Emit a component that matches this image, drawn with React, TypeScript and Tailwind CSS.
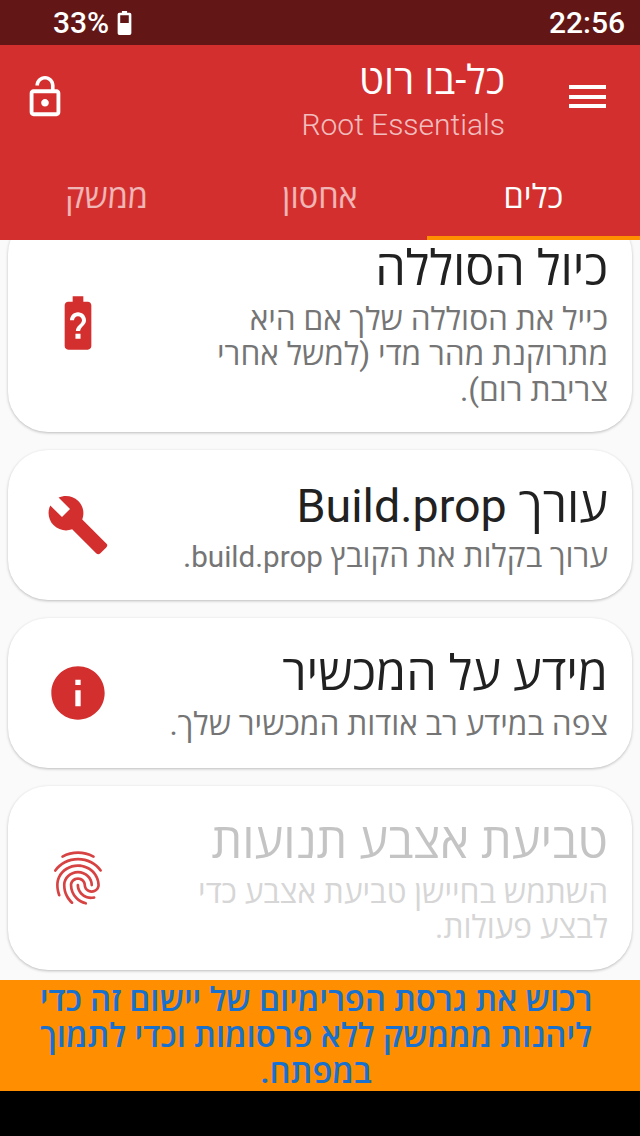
import type { ReactNode } from "react";

const batteryUnknown =
  "M15.67 4H14V2h-4v2H8.33C7.6 4 7 4.6 7 5.33v15.33C7 21.4 7.6 22 8.33 22h7.33c.74 0 1.34-.6 1.34-1.33V5.33C17 4.6 16.4 4 15.67 4zm-2.72 13.95h-1.9v-1.9h1.9v1.9zm1.35-5.26s-.38.42-.67.71c-.48.48-.83 1.15-.83 1.6h-1.6c0-.83.46-1.52.93-2l.93-.94c.27-.27.44-.65.44-1.06 0-.83-.67-1.5-1.5-1.5s-1.5.67-1.5 1.5H9c0-1.66 1.34-3 3-3s3 1.34 3 3c0 .66-.27 1.26-.7 1.69z";
const wrench =
  "M22.7 19l-9.1-9.1c.9-2.3.4-5-1.5-6.9-2-2-5-2.4-7.4-1.3L9 6 6 9 1.6 4.7C.4 7.1.9 10.1 2.9 12.1c1.9 1.9 4.6 2.4 6.9 1.5l9.1 9.1c.4.4 1 .4 1.4 0l2.3-2.3c.5-.4.5-1.1.1-1.4z";
const info =
  "M12 2C6.48 2 2 6.48 2 12s4.48 10 10 10 10-4.48 10-10S17.52 2 12 2zm1 15h-2v-6h2v6zm0-8h-2V7h2v2z";
const fingerprint =
  "M17.81 4.47c-.08 0-.16-.02-.23-.06C15.66 3.42 14 3 12.01 3c-1.98 0-3.86.47-5.57 1.41-.24.13-.54.04-.68-.2-.13-.24-.04-.55.2-.68C7.82 2.52 9.86 2 12.01 2c2.13 0 3.99.47 6.03 1.52.25.13.34.43.21.67-.09.18-.26.28-.44.28zM3.5 9.72c-.1 0-.2-.03-.29-.09-.23-.16-.28-.47-.12-.7.99-1.4 2.25-2.5 3.75-3.27C9.98 4.04 14 4.03 17.15 5.65c1.5.77 2.76 1.86 3.75 3.25.16.22.11.54-.12.7-.23.16-.54.11-.7-.12-.9-1.26-2.04-2.25-3.39-2.94-2.87-1.47-6.54-1.47-9.4.01-1.36.7-2.5 1.7-3.4 2.96-.08.14-.23.21-.39.21zm6.25 12.07c-.13 0-.26-.05-.35-.15-.87-.87-1.34-1.43-2.01-2.64-.69-1.23-1.05-2.73-1.05-4.34 0-2.97 2.54-5.39 5.66-5.39s5.66 2.42 5.66 5.39c0 .28-.22.5-.5.5s-.5-.22-.5-.5c0-2.42-2.09-4.39-4.66-4.39s-4.66 1.97-4.66 4.39c0 1.44.32 2.77.93 3.85.64 1.15 1.08 1.64 1.85 2.42.19.2.19.51 0 .71-.11.1-.24.15-.37.15zm7.17-1.85c-1.19 0-2.24-.3-3.1-.89-1.49-1.01-2.38-2.65-2.38-4.39 0-.28.22-.5.5-.5s.5.22.5.5c0 1.41.72 2.74 1.94 3.56.71.48 1.54.71 2.54.71.24 0 .64-.03 1.04-.1.27-.05.53.13.58.41.05.27-.13.53-.41.58-.57.11-1.07.12-1.21.12zM14.91 22c-.04 0-.09-.01-.13-.02-1.59-.44-2.63-1.03-3.72-2.1-1.4-1.39-2.17-3.24-2.17-5.22 0-1.62 1.38-2.94 3.08-2.94s3.08 1.32 3.08 2.94c0 1.07.93 1.94 2.08 1.94s2.08-.87 2.08-1.94c0-3.77-3.25-6.83-7.25-6.83-2.84 0-5.44 1.58-6.61 4.03-.39.81-.59 1.76-.59 2.8 0 .78.07 2.01.67 3.61.1.26-.03.55-.29.64-.26.1-.55-.04-.64-.29-.49-1.31-.73-2.61-.73-3.96 0-1.2.23-2.29.68-3.24 1.33-2.79 4.28-4.6 7.51-4.6 4.55 0 8.25 3.51 8.25 7.83 0 1.62-1.38 2.94-3.08 2.94s-3.08-1.32-3.08-2.94c0-1.07-.93-1.94-2.08-1.94s-2.08.87-2.08 1.94c0 1.71.66 3.31 1.87 4.51.95.94 1.86 1.46 3.27 1.85.27.07.42.35.35.61-.05.23-.26.38-.47.38z";
const lockOpen =
  "M12 17c1.1 0 2-.9 2-2s-.9-2-2-2-2 .9-2 2 .9 2 2 2zm6-9h-1V6c0-2.76-2.24-5-5-5S7 3.24 7 6h1.9c0-1.71 1.39-3.1 3.1-3.1 1.71 0 3.1 1.39 3.1 3.1v2H6c-1.1 0-2 .9-2 2v10c0 1.1.9 2 2 2h12c1.1 0 2-.9 2-2V10c0-1.1-.9-2-2-2zm0 12H6V10h12v10z";

const Icon = ({ d, className }: { d: string; className: string }) => (
  <svg viewBox="0 0 24 24" fill="currentColor" className={className}>
    <path d={d} />
  </svg>
);

const cards: {
  title: ReactNode;
  text: ReactNode;
  icon: string;
  height: string;
  disabled: boolean;
}[] = [
  {
    title: "כיול הסוללה",
    text: "כייל את הסוללה שלך אם היא מתרוקנת מהר מדי (למשל אחרי צריבת רום).",
    icon: batteryUnknown,
    height: "h-[218px] -mt-[26px]",
    disabled: false,
  },
  {
    title: (
      <>
        עורך <span className="text-[46.6px]">Build.prop</span>
      </>
    ),
    text: (
      <>
        ערוך בקלות את הקובץ <span className="text-[29.6px]">build.prop</span>.
      </>
    ),
    icon: wrench,
    height: "h-[150px]",
    disabled: false,
  },
  {
    title: "מידע על המכשיר",
    text: "צפה במידע רב אודות המכשיר שלך.",
    icon: info,
    height: "h-[150px]",
    disabled: false,
  },
  {
    title: "טביעת אצבע תנועות",
    text: "השתמש בחיישן טביעת אצבע כדי לבצע פעולות.",
    icon: fingerprint,
    height: "h-[184px]",
    disabled: true,
  },
];

const tabs = [
  { label: "כלים", active: true },
  { label: "אחסון", active: false },
  { label: "ממשק", active: false },
];

const App = () => {
  return (
    <div
      dir="rtl"
      className="flex h-[1136px] w-[640px] flex-col overflow-hidden bg-black font-['Roboto','Open_Sans','Liberation_Sans',sans-serif]"
    >
      <div dir="ltr" className="flex h-[45px] shrink-0 items-center justify-between bg-[#631616] pl-[53px] pr-[15px] text-[30px] font-medium text-white">
        <div className="flex items-center gap-[8px]">
          <span>33%</span>
          <svg viewBox="0 0 16 28" className="h-[24px] w-[15px]">
            <path
              fill="#fff"
              fillRule="evenodd"
              d="M5 0h6v2h3a2 2 0 0 1 2 2v22a2 2 0 0 1-2 2H2a2 2 0 0 1-2-2V4a2 2 0 0 1 2-2h3zM3 5v9h10V5z"
            />
          </svg>
        </div>
        <span>22:56</span>
      </div>

      <header className="h-[195px] shrink-0 bg-[#d32f2f] text-white">
        <div className="flex h-[124px] items-start pr-[34px] pl-[22px] pt-[29px]">
          <div className="flex h-[45px] w-[37px] flex-col justify-center gap-[5.5px]">
            <span className="h-[4px] w-[37px] bg-white" />
            <span className="h-[4px] w-[37px] bg-white" />
            <span className="h-[4px] w-[37px] bg-white" />
          </div>
          <div className="mr-[64px] flex-1">
            <div className="-mt-[15px] text-[40px] leading-[44px]">כל-בו רוט</div>
            <div className="mt-[4px] text-[30px] leading-[36px] font-light text-white/70">
              Root Essentials
            </div>
          </div>
          <Icon d={lockOpen} className="h-[46px] w-[46px]" />
        </div>
        <div className="flex h-[71px]">
          {tabs.map((tab) => (
            <div
              key={tab.label}
              className={
                tab.active
                  ? "flex flex-1 items-center justify-center border-b-[4px] border-[#ff8f00] pb-[11px] text-[32.5px] text-white"
                  : "flex flex-1 items-center justify-center border-b-[4px] border-transparent pb-[11px] text-[32.5px] text-white/65"
              }
            >
              {tab.label}
            </div>
          ))}
        </div>
      </header>

      <main className="flex h-[740px] shrink-0 flex-col gap-[18px] overflow-hidden bg-[#fafafa] px-[8px]">
        {cards.map((card, index) => (
          <div
            key={index}
            className={
              "flex shrink-0 items-center justify-between rounded-[40px] bg-white pr-[24px] pl-[38px] shadow-[0_1px_3px_rgba(0,0,0,0.25)] " +
              card.height
            }
          >
            <div className="w-[440px]">
              <div
                className={
                  card.disabled
                    ? "whitespace-nowrap text-[48.6px] leading-[62px] text-[#c4c4c4]"
                    : "whitespace-nowrap text-[48.6px] leading-[62px] text-[#212121]"
                }
              >
                {card.title}
              </div>
              <div
                className={
                  card.disabled
                    ? "mt-[2px] text-[31.6px] leading-[35.5px] text-[#d6d6d6]"
                    : "mt-[2px] text-[31.6px] leading-[35.5px] text-[#757575]"
                }
              >
                {card.text}
              </div>
            </div>
            <Icon
              d={card.icon}
              className={
                card.disabled
                  ? "h-[64px] w-[64px] shrink-0 text-[#d32f2f] opacity-90"
                  : "h-[64px] w-[64px] shrink-0 text-[#d32f2f]"
              }
            />
          </div>
        ))}
      </main>

      <div className="flex h-[111px] shrink-0 items-center justify-center bg-[#ff8f00] pr-[38px] pl-[30px] text-center text-[32.8px] leading-[36px] font-semibold text-[#1870cf]">
        רכוש את גרסת הפרימיום של יישום זה כדי ליהנות מממשק ללא פרסומות וכדי לתמוך במפתח.
      </div>
    </div>
  );
};

export default App;
